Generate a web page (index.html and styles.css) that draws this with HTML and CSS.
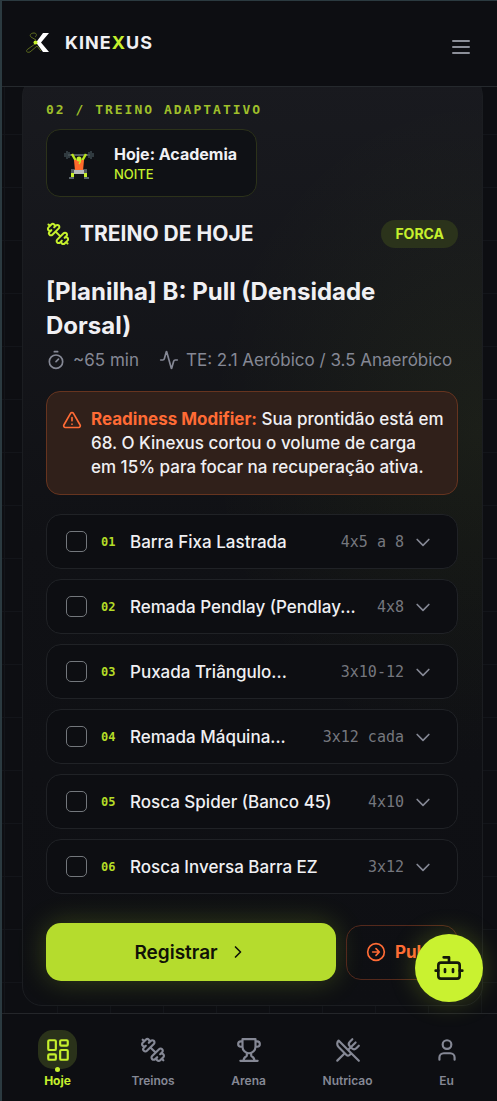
FILE: index.html
```html
<!DOCTYPE html>
<html lang="pt-BR">
<head>
<meta charset="utf-8">
<meta name="viewport" content="width=device-width, initial-scale=1">
<title>Kinexus</title>
<link rel="stylesheet" href="styles.css">
</head>
<body>
<svg class="sprite" aria-hidden="true">
  <symbol id="dumbbell" viewBox="0 0 24 24"><path d="M14.4 14.4 9.6 9.6M18.657 21.485a2 2 0 1 1-2.829-2.828l-1.767 1.768a2 2 0 1 1-2.829-2.829l6.364-6.364a2 2 0 1 1 2.829 2.829l-1.768 1.767a2 2 0 1 1 2.828 2.829zM21.5 21.5l-1.4-1.4M3.9 3.9 2.5 2.5M6.404 12.768a2 2 0 1 1-2.829-2.829l1.768-1.767a2 2 0 1 1-2.828-2.829l2.828-2.828a2 2 0 1 1 2.829 2.828l1.767-1.768a2 2 0 1 1 2.829 2.829z"/></symbol>
  <symbol id="chevron" viewBox="0 0 24 24"><path d="m5 9 7 7 7-7"/></symbol>
</svg>

<header class="topbar">
  <a class="brand" href="#">
    <svg class="logo" viewBox="0 0 24 22" aria-hidden="true">
      <path class="logo-line" d="M10 8 5 5C3 3 5 1 8 1s3 3 1 4M9 12l-7 5c-3 2-1 4 2 3l7-6 4 5"/>
      <path class="logo-white" d="M17 1h6l-8 9.500 8 9.500h-6l-7-9.500z"/>
      <circle class="logo-dot" cx="9.500" cy="10.500" r="2"/>
    </svg>
    <span class="wordmark">KINE<em>X</em>US</span>
  </a>
  <button class="menu" type="button" aria-label="Menu">
    <svg class="icon" viewBox="0 0 24 24"><path d="M4 6h16M4 12h16M4 18h16"/></svg>
  </button>
</header>

<main class="page">
  <section class="card">
    <p class="eyebrow">02 / TREINO ADAPTATIVO</p>
    <div class="today">
      <svg class="lifter" viewBox="0 0 30 30" aria-hidden="true">
        <path d="M4 6h22" stroke="#6b7378" stroke-width="1.500"/>
        <path d="M1 4v4M3 2v8M5 3v6M25 3v6M27 2v8M29 4v4" stroke="#3c484e" stroke-width="1.500"/>
        <path d="m8 5 4 7M22 5l-4 7" stroke="#b9e51e" stroke-width="2.500"/>
        <path d="M10 11h10l-1 11h-8z" fill="#ff6b2c"/>
        <circle cx="15" cy="10" r="2.500" fill="#c6ee2c"/>
        <path d="M16 11q1 2-1 4" fill="none" stroke="#c6ee2c" stroke-width="1.500"/>
        <path d="M7 20h4v4H7zM19 20h4v4h-4z" fill="#555c60"/>
        <path d="M10 21h10v4H10z" fill="#b4b7ba"/>
        <path d="M7 24h3v4H7zM20 24h3v4h-3z" fill="#c6ee2c"/>
        <path d="M5 28h5v2H5zM20 28h5v2h-5z" fill="#59636a"/>
      </svg>
      <div>
        <strong class="today-name">Hoje: Academia</strong>
        <span class="today-time">NOITE</span>
      </div>
    </div>

    <div class="title-row">
      <h1 class="title"><svg class="icon" aria-hidden="true"><use href="#dumbbell"/></svg>TREINO DE HOJE</h1>
      <span class="tag">FORCA</span>
    </div>

    <h2 class="plan">[Planilha] B: Pull (Densidade Dorsal)</h2>
    <div class="meta">
      <span class="meta-item"><svg class="icon" viewBox="0 0 24 24"><path d="M10 2h4M12 14l3-3"/><circle cx="12" cy="14" r="8"/></svg>~65 min</span>
      <span class="meta-item"><svg class="icon" viewBox="0 0 24 24"><path d="M22 12h-2.480a2 2 0 0 0-1.930 1.460l-2.350 8.360a.25.25 0 0 1-.48 0L9.240 2.180a.25.25 0 0 0-.48 0l-2.350 8.360A2 2 0 0 1 4.490 12H2"/></svg>TE: 2.1 Aeróbico / 3.5 Anaeróbico</span>
    </div>

    <div class="alert">
      <svg class="icon" viewBox="0 0 24 24"><path d="m21.730 18-8-14a2 2 0 0 0-3.480 0l-8 14A2 2 0 0 0 4 21h16a2 2 0 0 0 1.730-3M12 9v4M12 17h.01"/></svg>
      <p><b>Readiness Modifier:</b> Sua prontidão está em 68. O Kinexus cortou o volume de carga em&nbsp;15% para focar na recuperação ativa.</p>
    </div>

    <ul class="list">
      <li class="exercise"><input id="e1" type="checkbox"><label for="e1"><span class="num">01</span><span class="name">Barra Fixa Lastrada</span></label><span class="sets">4x5 a 8</span><button class="expand" type="button" aria-label="Detalhes"><svg class="icon"><use href="#chevron"/></svg></button></li>
      <li class="exercise"><input id="e2" type="checkbox"><label for="e2"><span class="num">02</span><span class="name">Remada Pendlay (Pendlay...</span></label><span class="sets">4x8</span><button class="expand" type="button" aria-label="Detalhes"><svg class="icon"><use href="#chevron"/></svg></button></li>
      <li class="exercise"><input id="e3" type="checkbox"><label for="e3"><span class="num">03</span><span class="name">Puxada Triângulo...</span></label><span class="sets">3x10-12</span><button class="expand" type="button" aria-label="Detalhes"><svg class="icon"><use href="#chevron"/></svg></button></li>
      <li class="exercise"><input id="e4" type="checkbox"><label for="e4"><span class="num">04</span><span class="name">Remada Máquina...</span></label><span class="sets">3x12 cada</span><button class="expand" type="button" aria-label="Detalhes"><svg class="icon"><use href="#chevron"/></svg></button></li>
      <li class="exercise"><input id="e5" type="checkbox"><label for="e5"><span class="num">05</span><span class="name">Rosca Spider (Banco 45)</span></label><span class="sets">4x10</span><button class="expand" type="button" aria-label="Detalhes"><svg class="icon"><use href="#chevron"/></svg></button></li>
      <li class="exercise"><input id="e6" type="checkbox"><label for="e6"><span class="num">06</span><span class="name">Rosca Inversa Barra EZ</span></label><span class="sets">3x12</span><button class="expand" type="button" aria-label="Detalhes"><svg class="icon"><use href="#chevron"/></svg></button></li>
    </ul>

    <div class="actions">
      <button class="primary" type="button">Registrar<svg class="icon" viewBox="0 0 24 24"><path d="m9 18 6-6-6-6"/></svg></button>
      <button class="skip" type="button"><svg class="icon" viewBox="0 0 24 24"><circle cx="12" cy="12" r="10"/><path d="m12 16 4-4-4-4M8 12h8"/></svg>Pular</button>
    </div>
  </section>
</main>

<button class="fab" type="button" aria-label="Assistente">
  <svg class="icon" viewBox="0 0 24 24"><path d="M12 8V4H8"/><rect width="16" height="12" x="4" y="8" rx="2"/><path d="M2 14h2M20 14h2M15 13v2M9 13v2"/></svg>
</button>

<nav class="tabs">
  <a class="tab active" href="#"><span class="pill"><svg class="icon" viewBox="0 0 24 24"><rect width="7" height="9" x="3" y="3" rx="1"/><rect width="7" height="5" x="14" y="3" rx="1"/><rect width="7" height="9" x="14" y="12" rx="1"/><rect width="7" height="5" x="3" y="16" rx="1"/></svg></span>Hoje</a>
  <a class="tab" href="#"><span class="pill"><svg class="icon"><use href="#dumbbell"/></svg></span>Treinos</a>
  <a class="tab" href="#"><span class="pill"><svg class="icon" viewBox="0 0 24 24"><path d="M6 9H4.500a2.500 2.500 0 0 1 0-5H6M18 9h1.500a2.500 2.500 0 0 0 0-5H18M4 22h16M10 14.660V17c0 .55-.47.98-.97 1.210C7.850 18.750 7 20.240 7 22M14 14.660V17c0 .55.47.98.97 1.210C16.150 18.750 17 20.240 17 22M18 2H6v7a6 6 0 0 0 12 0V2Z"/></svg></span>Arena</a>
  <a class="tab" href="#"><span class="pill"><svg class="icon" viewBox="0 0 24 24"><path d="m16 2-2.300 2.300a3 3 0 0 0 0 4.200l1.800 1.800a3 3 0 0 0 4.200 0L22 8M15 15 3.300 3.300a4.200 4.200 0 0 0 0 6l7.300 7.300c.7.7 2 .7 2.800 0L15 15Zm0 0 7 7M2.100 21.800l6.400-6.300M19 5l-7 7"/></svg></span>Nutricao</a>
  <a class="tab" href="#"><span class="pill"><svg class="icon" viewBox="0 0 24 24"><path d="M19 21v-2a4 4 0 0 0-4-4H9a4 4 0 0 0-4 4v2"/><circle cx="12" cy="7" r="4"/></svg></span>Eu</a>
</nav>
</body>
</html>
```
FILE: styles.css
```css
:root {
  --lime: #c6f02d;
  --orange: #ff6b35;
  --ink: #0d0e12;
  --text: #f0f0f3;
  --muted: #858895;
  --line: #202226;
  --edge: #2b3a40;
  --mono: "DejaVu Sans Mono", "Liberation Mono", monospace;
}

* { box-sizing: border-box; }

body {
  margin: 0;
  min-height: 100vh;
  color: var(--text);
  font-family: Inter, "Open Sans", sans-serif;
  border-left: 2px solid var(--edge);
  background-color: var(--ink);
  background-image:
    linear-gradient(#13151a 1px, transparent 1px),
    linear-gradient(90deg, #13151a 1px, transparent 1px);
  background-size: 53px 53px;
  background-position: 4px 28px;
}

h1, h2, p, ul { margin: 0; padding: 0; }
button { font: inherit; color: inherit; background: none; border: 0; padding: 0; cursor: pointer; }
a { color: inherit; text-decoration: none; }

.sprite { position: absolute; width: 0; height: 0; }
.icon {
  display: block;
  flex: none;
  width: 20px;
  height: 20px;
  fill: none;
  stroke: currentColor;
  stroke-width: 2;
  stroke-linecap: round;
  stroke-linejoin: round;
}

.topbar {
  position: sticky;
  top: 0;
  z-index: 2;
  display: flex;
  align-items: center;
  justify-content: space-between;
  height: 87px;
  padding: 0 24px 2px;
  background: #0d0e12;
  border-top: 1px solid var(--edge);
  border-bottom: 1px solid #25292d;
}
.brand { display: flex; align-items: center; gap: 15px; }
.logo { width: 24px; height: 22px; }
.logo-line { fill: none; stroke: #5d6b1f; stroke-width: 1; }
.logo-white { fill: #fff; }
.logo-dot { fill: var(--lime); }
.wordmark { font-size: 18px; font-weight: 700; letter-spacing: 1px; }
.wordmark em { font-style: normal; color: var(--lime); }
.menu { color: #8c8f99; padding-top: 8px; }
.menu .icon { width: 24px; height: 24px; }

.page { padding: 0 14px 96px 20px; }
.card {
  margin-top: -11px;
  padding: 24px 24px 24px 23px;
  border: 1px solid #1b1d21;
  border-radius: 20px;
  background:
    radial-gradient(ellipse 60% 36% at 100% 38%, rgba(198, 240, 45, .05), transparent),
    linear-gradient(#191a1f, #101115 50%, #0e0f13);
}

.eyebrow {
  font: 700 13px/18px var(--mono);
  letter-spacing: 2px;
  color: #9fbf2b;
  white-space: nowrap;
}
.today {
  display: flex;
  align-items: center;
  gap: 20px;
  width: fit-content;
  margin-top: 10px;
  padding: 13px 19px 12px 17px;
  border: 1px solid #2c321a;
  border-radius: 14px;
  background: #0f1115;
}
.lifter { width: 30px; height: 30px; }
.today-name { display: block; font-size: 16px; line-height: 22px; }
.today-time { display: block; font-size: 13px; line-height: 19px; font-weight: 500; color: var(--lime); }

.title-row { display: flex; justify-content: space-between; align-items: center; margin-top: 22px; }
.title { display: flex; align-items: center; gap: 10px; font-size: 21px; line-height: 30px; }
.title .icon { width: 24px; height: 24px; color: var(--lime); }
.tag {
  padding: 0 14px;
  border-radius: 15px;
  background: #2b331b;
  color: var(--lime);
  font-size: 14px;
  line-height: 28px;
  font-weight: 700;
}

.plan { margin-top: 26px; font-size: 24px; line-height: 34px; }
.meta {
  display: flex;
  gap: 20px;
  margin-top: 5px;
  color: var(--muted);
  font-size: 17px;
  line-height: 24px;
  white-space: nowrap;
}
.meta-item { display: flex; align-items: center; gap: 7px; }

.alert {
  display: flex;
  gap: 9px;
  margin-top: 19px;
  padding: 15px 8px 15px 15px;
  border: 1px solid #66341f;
  border-radius: 14px;
  background: #30201a;
  font-size: 17px;
  font-weight: 500;
  line-height: 24px;
}
.alert .icon { margin-top: 3px; color: var(--orange); }
.alert b { color: var(--orange); font-weight: 700; }

.list { display: grid; gap: 10px; margin-top: 19px; list-style: none; }
.exercise {
  display: flex;
  align-items: center;
  min-height: 55px;
  padding: 0 24px 0 19px;
  border: 1px solid var(--line);
  border-radius: 15px;
  background: var(--ink);
}
.exercise input {
  flex: none;
  appearance: none;
  width: 21px;
  height: 21px;
  margin: 0;
  border: 1px solid #73777c;
  border-radius: 5px;
}
.exercise input:checked { background: var(--lime); }
.exercise label { display: flex; align-items: center; flex: 1; min-width: 0; }
.num { width: 29px; margin-left: 14px; flex: none; color: #b4dc27; font: 700 12px/24px var(--mono); }
.name {
  overflow: hidden;
  font-size: 17px;
  font-weight: 500;
  line-height: 24px;
  white-space: nowrap;
}
.sets { margin-left: 8px; color: #75777e; font: 15px/24px var(--mono); white-space: nowrap; }
.expand { margin-left: 9px; color: var(--muted); }

.actions { display: flex; align-items: center; gap: 10px; margin-top: 29px; }
.primary {
  display: flex;
  align-items: center;
  justify-content: center;
  gap: 10px;
  flex: 1;
  height: 58px;
  border-radius: 15px;
  background: #b5dc2d;
  color: #101207;
  font-size: 19px;
  font-weight: 600;
  box-shadow: 0 0 28px rgba(198, 240, 45, .22);
}
.skip {
  display: flex;
  align-items: center;
  gap: 9px;
  height: 55px;
  padding: 0 19px;
  border: 1px solid #54291c;
  border-radius: 15px;
  color: var(--orange);
  font-size: 17px;
  font-weight: 700;
}

.fab {
  position: fixed;
  right: 14px;
  bottom: 99px;
  z-index: 3;
  display: grid;
  place-items: center;
  width: 68px;
  height: 68px;
  border-radius: 50%;
  background: #c9f230;
  color: #14180a;
  box-shadow: 0 0 26px rgba(198, 240, 45, .25);
}
.fab .icon { width: 32px; height: 32px; }

.tabs {
  position: fixed;
  left: 2px;
  right: 0;
  bottom: 0;
  z-index: 2;
  display: flex;
  justify-content: space-between;
  height: 88px;
  padding: 16px 31px 0 36px;
  border-top: 1px solid #24262a;
  background: var(--ink);
}
.tab {
  display: flex;
  flex-direction: column;
  align-items: center;
  gap: 4px;
  color: var(--muted);
  font-size: 12px;
  line-height: 16px;
  font-weight: 600;
}
.pill { position: relative; display: grid; place-items: center; width: 39px; height: 39px; border-radius: 15px; }
.pill .icon { width: 26px; height: 26px; }
.active { color: var(--lime); font-weight: 700; }
.active .pill { background: #2a321a; }
.active .pill::after {
  content: "";
  position: absolute;
  left: 17px;
  bottom: -3px;
  width: 5px;
  height: 5px;
  border-radius: 50%;
  background: var(--lime);
}
```
